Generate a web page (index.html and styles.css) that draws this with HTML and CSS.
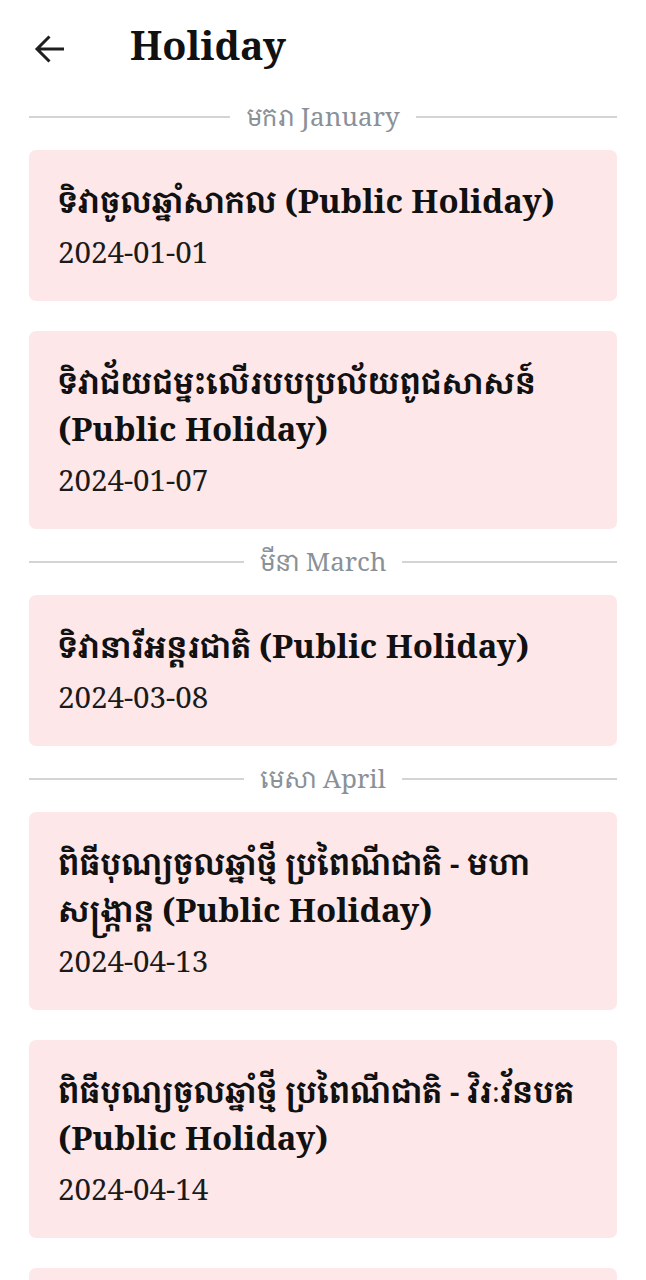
FILE: index.html
```html
<!DOCTYPE html>
<html lang="km">
<head>
<meta charset="utf-8">
<link rel="stylesheet" href="styles.css">
</head>
<body>
<header class="topbar">
  <button class="back" aria-label="Back">
    <svg width="32" height="32" viewBox="0 0 32 32"><path d="M30 16H3.5M15.5 3.5L3 16l12.5 12.5" fill="none" stroke="#1f1f1f" stroke-width="3"/></svg>
  </button>
  <h1 class="title">Holiday</h1>
</header>
<main class="list">
  <section class="group">
    <div class="divider"><span>មករា <span class="en">January</span></span></div>
    <div class="card"><div class="name">ទិវាចូលឆ្នាំសាកល <span class="en">(Public Holiday)</span></div><div class="date">2024-01-01</div></div>
    <div class="card"><div class="name">ទិវាជ័យជម្នះលើរបបប្រល័យពូជសាសន៍ <span class="en">(Public Holiday)</span></div><div class="date">2024-01-07</div></div>
  </section>
  <section class="group">
    <div class="divider"><span>មីនា <span class="en">March</span></span></div>
    <div class="card"><div class="name">ទិវានារីអន្តរជាតិ <span class="en">(Public Holiday)</span></div><div class="date">2024-03-08</div></div>
  </section>
  <section class="group">
    <div class="divider"><span>មេសា <span class="en">April</span></span></div>
    <div class="card"><div class="name">ពិធីបុណ្យចូលឆ្នាំថ្មី ប្រពៃណីជាតិ - មហា<wbr>សង្ក្រាន្ត <span class="en">(Public Holiday)</span></div><div class="date">2024-04-13</div></div>
    <div class="card"><div class="name">ពិធីបុណ្យចូលឆ្នាំថ្មី ប្រពៃណីជាតិ - វិរៈវ័នបត <span class="en">(Public Holiday)</span></div><div class="date">2024-04-14</div></div>
    <div class="card"><div class="name">ពិធីបុណ្យចូលឆ្នាំថ្មី ប្រពៃណីជាតិ - ថ្ងៃឡើងស័ក <span class="en">(Public Holiday)</span></div><div class="date">2024-04-15</div></div>
  </section>
</main>
</body>
</html>
```
FILE: styles.css
```css
html, body {
  margin: 0;
  padding: 0;
  background: #ffffff;
}
body {
  width: 646px;
  height: 1280px;
  overflow: hidden;
  font-family: "Noto Serif", "DejaVu Serif", "Noto Serif Khmer", "Noto Sans Khmer", "Khmer OS", serif;
  color: #111111;
}
.topbar {
  height: 96px;
  display: flex;
  align-items: center;
  padding-left: 34px;
  box-sizing: border-box;
}
.back {
  width: 32px;
  height: 32px;
  padding: 0;
  border: 0;
  background: none;
  display: flex;
  align-items: center;
  justify-content: center;
  margin-top: 2px;
}
.title {
  margin: 0 0 4px 64px;
  font-size: 39.5px;
  font-weight: 700;
  color: #111111;
  line-height: 1;
}
.list {
  padding: 4px 29px 0 29px;
  display: flex;
  flex-direction: column;
  gap: 16px;
}
.group {
  display: flex;
  flex-direction: column;
  gap: 30px;
}
.divider {
  height: 34px;
  display: flex;
  align-items: center;
  gap: 16px;
  margin-bottom: -14px;
  color: #8a9198;
  font-size: 24px;
  line-height: 34px;
}
.divider .en {
  font-size: 26px;
  line-height: 1;
}
.divider::before,
.divider::after {
  content: "";
  flex: 1;
  height: 2px;
  background: #d4d4d4;
}
.card {
  background: #fde7e9;
  border-radius: 7px;
  padding: 28px 29px 29px 29px;
}
.name {
  font-size: 30px;
  font-weight: 700;
  line-height: 47px;
  color: #111111;
}
.name .en {
  font-size: 33px;
  line-height: 1;
}
.date {
  margin-top: 7px;
  font-size: 29.5px;
  line-height: 40px;
  color: #1a1a1a;
}
```
